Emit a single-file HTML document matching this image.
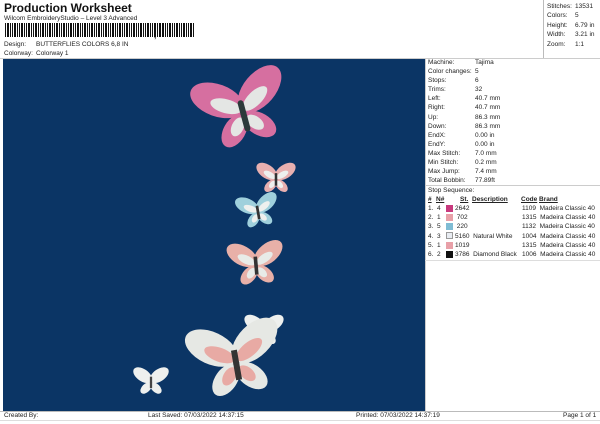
<!DOCTYPE html>
<html><head><style>
*{margin:0;padding:0;box-sizing:border-box}
body{width:600px;height:424px;background:#fff;font-family:"Liberation Sans",sans-serif;color:#222;position:relative;overflow:hidden;font-size:6.5px}
.a{position:absolute;white-space:nowrap;line-height:9px}
.bc{position:absolute;left:5px;top:23px;height:14px;width:185px;background:repeating-linear-gradient(90deg,#111 0 1px,#fff 1px 2px,#111 2px 4px,#fff 4px 5px,#111 5px 6px,#fff 6px 7px)}
</style></head><body>
<div class="a" style="left:4px;top:1px;font-size:12px;font-weight:bold;line-height:14px;color:#111">Production Worksheet</div>
<div class="a" style="left:4px;top:14px">Wilcom EmbroideryStudio – Level 3 Advanced</div>
<div class="bc"></div>
<div class="a" style="left:154px;top:31px;font-size:8px;font-weight:bold">,</div>
<div class="bc" style="left:160px;width:34px"></div>
<div class="a" style="left:4px;top:40px">Design:</div><div class="a" style="left:36px;top:40px">BUTTERFLIES COLORS 6,8 IN</div>
<div class="a" style="left:4px;top:49px">Colorway:</div><div class="a" style="left:36px;top:49px">Colorway 1</div>
<div style="position:absolute;left:543px;top:0;width:57px;height:59px;border-left:1px solid #bbb;border-bottom:1px solid #bbb"></div>
<div class="a" style="left:547px;top:2px;line-height:9.4px">Stitches:<br>Colors:<br>Height:<br>Width:<br>Zoom:</div>
<div class="a" style="left:575px;top:2px;line-height:9.4px">13531<br>5<br>6.79 in<br>3.21 in<br>1:1</div>
<div style="position:absolute;left:0;top:58px;width:600px;height:1px;background:#ccc"></div>
<div style="position:absolute;left:3px;top:59px;width:422px;height:352px;background:#0b3565"></div>
<div style="position:absolute;left:425px;top:59px;width:1px;height:352px;background:#ccc"></div>
<div class="a" style="left:428px;top:58px;line-height:9.1px">Machine:<br>Color changes:<br>Stops:<br>Trims:<br>Left:<br>Right:<br>Up:<br>Down:<br>EndX:<br>EndY:<br>Max Stitch:<br>Min Stitch:<br>Max Jump:<br>Total Bobbin:</div>
<div class="a" style="left:475px;top:58px;line-height:9.1px">Tajima<br>5<br>6<br>32<br>40.7 mm<br>40.7 mm<br>86.3 mm<br>86.3 mm<br>0.00 in<br>0.00 in<br>7.0 mm<br>0.2 mm<br>7.4 mm<br>77.89ft</div>
<div style="position:absolute;left:425px;top:185px;width:175px;height:1px;background:#ccc"></div>
<div class="a" style="left:428px;top:186px">Stop Sequence:</div>
<div class="a" style="left:428px;top:195px;font-weight:bold;text-decoration:underline">#</div>
<div class="a" style="left:436px;top:195px;font-weight:bold;text-decoration:underline">N#</div>
<div class="a" style="left:460px;top:195px;font-weight:bold;text-decoration:underline">St.</div>
<div class="a" style="left:472px;top:195px;font-weight:bold;text-decoration:underline">Description</div>
<div class="a" style="left:521px;top:195px;font-weight:bold;text-decoration:underline">Code</div>
<div class="a" style="left:539px;top:195px;font-weight:bold;text-decoration:underline">Brand</div>
<div class="a" style="left:428px;top:204px;line-height:9.2px">1.&nbsp; 4<br>2.&nbsp; 1<br>3.&nbsp; 5<br>4.&nbsp; 3<br>5.&nbsp; 1<br>6.&nbsp; 2</div>
<div style="position:absolute;left:446px;top:205px;width:7px;height:7px;background:#c83a7e"></div>
<div style="position:absolute;left:446px;top:214px;width:7px;height:7px;background:#e8a0a8"></div>
<div style="position:absolute;left:446px;top:223px;width:7px;height:7px;background:#7fbcd4"></div>
<div style="position:absolute;left:446px;top:232px;width:7px;height:7px;background:#e8ecf2;border:1px solid #999"></div>
<div style="position:absolute;left:446px;top:242px;width:7px;height:7px;background:#e8a0a8"></div>
<div style="position:absolute;left:446px;top:251px;width:7px;height:7px;background:#111"></div>
<div class="a" style="left:455px;top:204px;line-height:9.2px">2642<br>&nbsp;702<br>&nbsp;220<br>5160&nbsp; Natural White<br>1019<br>3786&nbsp; Diamond Black</div>
<div class="a" style="left:522px;top:204px;line-height:9.2px">1109&nbsp; Madeira Classic 40<br>1315&nbsp; Madeira Classic 40<br>1132&nbsp; Madeira Classic 40<br>1004&nbsp; Madeira Classic 40<br>1315&nbsp; Madeira Classic 40<br>1006&nbsp; Madeira Classic 40</div>
<div style="position:absolute;left:425px;top:260px;width:175px;height:1px;background:#ddd"></div>
<div style="position:absolute;left:0;top:411px;width:600px;height:1px;background:#bbb"></div>
<div style="position:absolute;left:0;top:420px;width:600px;height:1px;background:#ddd"></div>
<div class="a" style="left:4px;top:411px">Created By:</div>
<div class="a" style="left:148px;top:411px">Last Saved: 07/03/2022 14:37:15</div>
<div class="a" style="left:356px;top:411px">Printed: 07/03/2022 14:37:19</div>
<div class="a" style="left:563px;top:411px">Page 1 of 1</div>
<svg style="position:absolute;left:0;top:0" width="600" height="424">
<defs>
<g id="bf">
<ellipse cx="-22" cy="-18" rx="28" ry="16" transform="rotate(35 -22 -18)"/>
<ellipse cx="22" cy="-18" rx="28" ry="16" transform="rotate(-35 22 -18)"/>
<ellipse cx="-13" cy="16" rx="18" ry="11" transform="rotate(-45 -13 16)"/>
<ellipse cx="13" cy="16" rx="18" ry="11" transform="rotate(45 13 16)"/>
</g>
<g id="in">
<ellipse cx="-15" cy="-10" rx="16" ry="7" transform="rotate(30 -15 -10)"/>
<ellipse cx="15" cy="-10" rx="16" ry="7" transform="rotate(-30 15 -10)"/>
<ellipse cx="-9" cy="13" rx="10" ry="6" transform="rotate(-50 -9 13)"/>
<ellipse cx="9" cy="13" rx="10" ry="6" transform="rotate(50 9 13)"/>
</g>
</defs>
<g transform="translate(243,112) rotate(-15)"><use href="#bf" fill="#d66fa0"/><use href="#in" fill="#e4e6e4"/><rect x="-3" y="-12" width="6" height="32" rx="3" fill="#2c3a3a"/></g>
<g transform="translate(276,179) scale(0.42)"><use href="#bf" fill="#e8b0b0"/><use href="#in" fill="#eef0ee"/><rect x="-3" y="-14" width="6" height="30" fill="#333"/></g>
<g transform="translate(258,212) rotate(-10) scale(0.45)"><use href="#bf" fill="#9fd0dc"/><use href="#in" fill="#eef0ee"/><rect x="-3" y="-14" width="6" height="30" fill="#333"/></g>
<g transform="translate(256,265) rotate(-5) scale(0.6)"><use href="#bf" fill="#e8b0a8"/><use href="#in" fill="#e8ebe8"/><rect x="-3" y="-14" width="6" height="30" fill="#333"/></g>
<g transform="translate(264,331) scale(0.42)"><use href="#bf" fill="#eef0ee"/><rect x="-3" y="-14" width="6" height="30" fill="#444"/></g>
<g transform="translate(236,362) rotate(-10)"><use href="#bf" fill="#e6e8e4"/><use href="#in" fill="#e8aaa4"/><rect x="-3" y="-12" width="6" height="30" fill="#333"/></g>
<g transform="translate(151,382) scale(0.38)"><use href="#bf" fill="#eef0ee"/><rect x="-3" y="-14" width="6" height="30" fill="#444"/></g>
</svg>
</body></html>
